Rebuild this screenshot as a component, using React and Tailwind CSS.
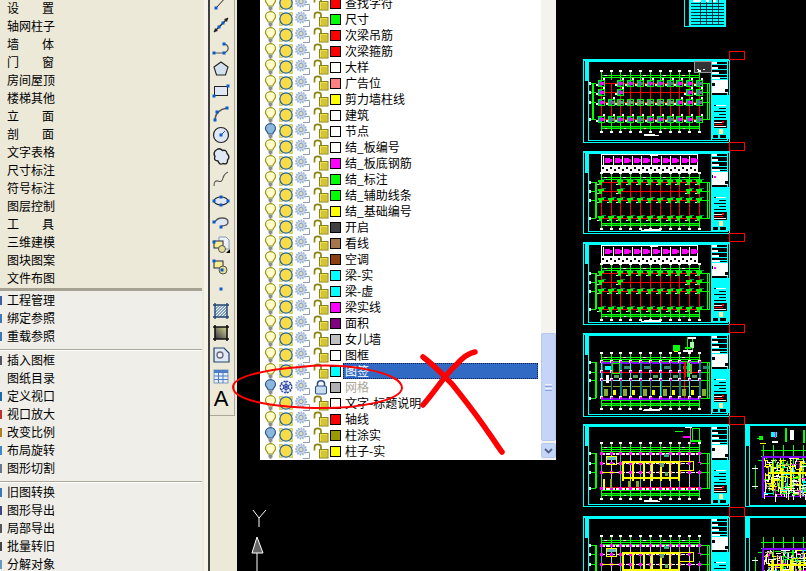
import React from "react";

const CJK = { fontFamily: '"Noto Sans CJK SC", "Liberation Sans", sans-serif' };

const upper = ["设置","轴网柱子","墙体","门窗","房间屋顶","楼梯其他","立面","剖面","文字表格","尺寸标注","符号标注","图层控制","工具","三维建模","图块图案","文件布图"];
const sec2 = [["工程管理","bg-[#3a5fa8]"],["绑定参照","bg-[#3c78b8]"],["重载参照","bg-[#3c78b8]"]];
const sec3 = [["插入图框","bg-[#555566]"],["图纸目录",""],["定义视口","bg-[#1a6aa8]"],["视口放大","bg-[#c03030]"],["改变比例","bg-[#b08020]"],["布局旋转","bg-[#3c88c8]"],["图形切割","bg-[#667788]"]];
const sec4 = [["旧图转换","bg-[#3c78b8]"],["图形导出","bg-[#404880]"],["局部导出","bg-[#555555]"],["批量转旧","bg-[#444444]"],["分解对象","bg-[#6699bb]"]];

function MenuRow({ label, mark }) {
  const two = label.length === 2;
  return (
    <div className="flex h-[18px] items-center text-[12px] leading-none text-black">
      <div className="w-[7px] flex-none">
        {mark ? <div className={`h-[9px] w-[2px] ${mark}`} /> : null}
      </div>
      <div className={two ? "flex w-[47px] justify-between" : "flex"}>
        {two ? (<><span>{label[0]}</span><span>{label[1]}</span></>) : <span>{label}</span>}
      </div>
    </div>
  );
}

const Sep = () => <div className="h-[2px] border-t border-b border-t-[#aca899] border-b-white" />;

function Grip({ x, y }) {
  return <rect x={x - 1.5} y={y - 1.5} width="3" height="3" fill="#0a5cc8" />;
}

const tools = [
  <g><path d="M6 16 L17 4" stroke="#222" fill="none" /><Grip x={6} y={16} /></g>,
  <g><path d="M4 18 L18 4" stroke="#222" strokeWidth="1.4" fill="none" /><path d="M4 18l1-4 3 3zM18 4l-1 4-3-3z" fill="#222" /><Grip x={9} y={13} /><Grip x={13} y={9} /></g>,
  <g><path d="M4 17 H14 Q19 15 18 11 Q17 8 14 8" stroke="#555" strokeWidth="1.2" fill="none" /><Grip x={4} y={17} /><Grip x={14} y={17} /><Grip x={14} y={8} /></g>,
  <path d="M11 4 L18 9 L15.5 17 H6.5 L4 9 Z" fill="#d3e0ee" stroke="#222" strokeWidth="1.1" />,
  <g><rect x="4.5" y="6.5" width="13" height="9" fill="#dfe8f4" stroke="#222" /><Grip x={4} y={16} /><Grip x={18} y={6} /></g>,
  <g><path d="M5 17 Q6 8 17 6" stroke="#555" strokeWidth="1.4" fill="none" /><Grip x={5} y={18} /><Grip x={7} y={10} /><Grip x={17} y={6} /></g>,
  <g><circle cx="11" cy="11" r="7.5" fill="#dfe8f4" stroke="#222" strokeWidth="1.2" /><path d="M11 11 L15 7" stroke="#0a5cc8" /><Grip x={11} y={11} /></g>,
  <path d="M7 3.500 Q10 1.500 12.500 4.500 Q16.500 3.500 17 7.500 Q20.500 11 17.500 14 Q18 19 13 17.500 Q9.500 19.500 8 15 Q3 14.500 5 10.500 Q2.500 6 7 3.500Z" fill="#dfe8f4" stroke="#222" strokeWidth="1.4" />,
  <path d="M4 18 Q4 12 8 13 Q12 15 13 10 Q14 6 18 4" stroke="#555" strokeWidth="1.1" fill="none" />,
  <g><ellipse cx="11" cy="11" rx="7" ry="4" fill="#dfe8f4" stroke="#222" strokeWidth="1.1" /><Grip x={11} y={7} /><Grip x={11} y={15} /><Grip x={4} y={11} /><Grip x={18} y={11} /></g>,
  <g><path d="M5 10 Q7 6 12 6 Q18 6 18 10 Q18 14 11 14" stroke="#555" strokeWidth="1.3" fill="#dfe8f4" /><Grip x={4} y={10} /><Grip x={11} y={15} /></g>,
  <g><path d="M9 3 H16 L19 6 V15 H9Z" fill="#eef2f8" stroke="#7f9db9" /><rect x="4" y="7" width="9" height="7" fill="#f6ee90" stroke="#224" /><circle cx="12" cy="15" r="3.5" fill="#e6de90" stroke="#555" /><Grip x={4} y={8} /><path d="M16 19 L20 19 L20 15Z" fill="#000" /></g>,
  <g><rect x="4" y="5" width="9" height="7" fill="#f6ee90" stroke="#224" /><circle cx="13" cy="14" r="4" fill="#e6de90" stroke="#555" /><Grip x={4} y={5} /><Grip x={12} y={14} /></g>,
  <Grip x={11} y={11} />,
  <g><rect x="5" y="5" width="12" height="12" fill="#7fa0c8" /><path d="M5 8 L8 5 M5 11 L11 5 M5 14 L14 5 M5 17 L17 5 M8 17 L17 8 M11 17 L17 11 M14 17 L17 14" stroke="#fff" /><path d="M3 5 H19 M3 17 H19 M5 3 V19 M17 3 V19" stroke="#23466e" strokeWidth="1.4" /></g>,
  <g><defs><linearGradient id="gr" x1="0" y1="1" x2="1" y2="0"><stop offset="0" stopColor="#334" /><stop offset="1" stopColor="#d8d890" /></linearGradient></defs><rect x="5" y="5" width="12" height="12" fill="url(#gr)" /><path d="M3 5 H19 M3 17 H19 M5 3 V19 M17 3 V19" stroke="#111" strokeWidth="1.6" /></g>,
  <g><path d="M4 4 H14 L19 9 V18 H4Z" fill="#dfe8f4" stroke="#23466e" strokeWidth="1.2" /><circle cx="10" cy="11" r="3" fill="#eef2f8" stroke="#667" strokeWidth="1.3" /></g>,
  <g><rect x="4" y="4" width="14" height="13" fill="#e8eef8" stroke="#7f9db9" /><rect x="4" y="4" width="14" height="3" fill="#4a7cc8" /><path d="M4 10 H18 M4 13.5 H18 M8.5 7 V17 M13 7 V17" stroke="#4a7cc8" /></g>,
];

function Bulb({ off }) {
  const fill = off ? "#8ab8e0" : "#fffcc8";
  const line = off ? "#33587f" : "#9a9410";
  return (
    <svg width="16" height="16" viewBox="0 0 16 16" className="flex-none">
      <path d="M8.500 0.700 C5.300 0.700 3.500 3 3.500 5.500 C3.500 8 6 9 6.200 11 H10.800 C11 9 13.500 8 13.500 5.500 C13.500 3 11.700 0.700 8.500 0.700Z" fill={fill} stroke={line} strokeWidth="1.200" />
      <rect x="6.500" y="11.500" width="4" height="3" fill="#8c8c8c" />
      <rect x="7.500" y="14.500" width="2" height="1" fill="#444" />
    </svg>
  );
}
function Sun({ frozen }) {
  if (frozen) {
    return (
      <svg width="16" height="16" viewBox="0 0 16 16" className="flex-none">
        <circle cx="8" cy="8" r="5.800" fill="#e8eefa" stroke="#2a40a8" strokeWidth="1.300" strokeDasharray="2 1" />
        <circle cx="8" cy="8" r="2.500" fill="none" stroke="#2a40a8" />
        <path d="M8 2 V14 M2.800 5 L13.200 11 M2.800 11 L13.200 5" stroke="#2a40a8" />
      </svg>
    );
  }
  return (
    <svg width="16" height="16" viewBox="0 0 16 16" className="flex-none">
      <path d="M1.500 1.500h3v3h-3zM11.500 1.500h3v3h-3zM1.500 11.500h3v3h-3zM11.500 11.500h3v3h-3z" fill="#f0e050" stroke="#a8a040" strokeWidth="0.500" />
      <circle cx="8" cy="8" r="6.200" fill="#f8dc48" stroke="#2468a8" strokeWidth="1.300" />
    </svg>
  );
}
function Gear() {
  return (
    <svg width="16" height="16" viewBox="0 0 16 16" className="flex-none">
      <path d="M9 9.500 H15.500 V15.500 H9" fill="none" stroke="#8f9db0" />
      <circle cx="7" cy="6.500" r="5" fill="#c8d6e6" stroke="#9ab2d4" strokeWidth="2" strokeDasharray="1.500 1" />
      <circle cx="7" cy="6.500" r="2.200" fill="#dedcb4" stroke="#8ca2c4" />
    </svg>
  );
}
function Lock({ locked }) {
  if (locked) {
    return (
      <svg width="16" height="16" viewBox="0 0 16 16" className="flex-none">
        <path d="M4.500 8 V4.500 C4.500 0.800 11.500 0.800 11.500 4.500 V8" fill="none" stroke="#2a5090" strokeWidth="1.600" />
        <rect x="2.500" y="7" width="11" height="8" rx="1.500" fill="#c8dcf0" stroke="#2a5090" strokeWidth="1.100" />
      </svg>
    );
  }
  return (
    <svg width="16" height="16" viewBox="0 0 16 16" className="flex-none">
      <path d="M1.500 7.500 V4 C1.500 0.500 8 0.500 8 4 V7" fill="none" stroke="#8a8410" strokeWidth="1.700" />
      <rect x="6.500" y="6.500" width="8.500" height="8.500" fill="#f0e050" stroke="#8a8410" />
      <path d="M8 9h6M8 11h6M8 13h6" stroke="#b8a820" />
    </svg>
  );
}

const layers = [
  ["查找字符","#ff0000"],["尺寸","#00ff00"],["次梁吊筋","#ff0000"],["次梁箍筋","#ff0000"],["大样","#ffffff"],["广告位","#ff8080"],["剪力墙柱线","#ffff00"],["建筑","#ffffff"],
  ["节点","#ffffff",1],["结_板编号","#ffffff"],["结_板底钢筋","#ff00ff"],["结_标注","#00ff00"],["结_辅助线条","#00ff00"],["结_基础编号","#ffff00"],["开启","#404040"],["看线","#a5764a"],
  ["空调","#8b4010"],["梁-实","#00ffff"],["梁-虚","#00ffff"],["梁实线","#ff00ff"],["面积","#800080"],["女儿墙","#c0c0c0"],["图框","#ffffff"],["图签","#00ffff"],
  ["网格","#b0b0b0",2],["文字-标题说明","#ffffff"],["轴线","#ff0000"],["柱涂实","#999900",1],["柱子-实","#ffff00"],
];

function LayerRow({ name, color, state }) {
  const selected = name === "图签";
  const grid = state === 2;
  return (
    <div className="flex h-[16px] flex-none items-center pl-[2px] pr-[3px]">
      <Bulb off={!!state} />
      <Sun frozen={grid} />
      <Gear />
      <div className="w-[3px] flex-none" />
      <Lock locked={grid} />
      <div className="ml-px h-[11px] w-[11px] flex-none border border-black" style={{ backgroundColor: color }} />
      {selected ? (
        <div className="ml-[2px] flex h-[16px] flex-1 items-center border border-dotted border-[#0b1f4a] bg-[#316ac5] pl-px text-[12px] leading-none text-white">{name}</div>
      ) : (
        <div className={`ml-[4px] whitespace-nowrap text-[12px] leading-none ${grid ? "text-[#aca899]" : "text-black"}`}>{name}</div>
      )}
    </div>
  );
}

/* ---------- CAD drawing ---------- */
const C = "#00ffff", G = "#00ff00", Rd = "#ff0000", W = "#ffffff", M = "#ff00ff", Y = "#ffff00", P = "#8000ff", K = "#000000";
let seed = 7;
const rnd = () => { seed = (seed * 16807) % 2147483647; return seed / 2147483647; };

function build() {
  const r = [];
  const R = (x, y, w, h, c) => r.push([x, y, w, h, c]);
  const box = (x, y, w, h, c) => { R(x, y, w, 1, c); R(x, y + h - 1, w, 1, c); R(x, y, 1, h, c); R(x + w - 1, y, 1, h, c); };
  const X = [601, 611, 620, 630, 640, 650, 660, 670, 679, 689, 699];

  const frame = (x, y, w, h, titleX) => {
    box(x, y, w, h, C);
    R(x + 1, y + 1, w - 2, 1, C);
    box(x + 5, y + 2, w - 7, h - 4, C);
    R(x + 2, y + 2, 3, 20, C);
    const t = titleX;
    R(t, y + 2, 1, h - 4, C);
    const T = w + x - 2 - t;
    R(t, y + 18, T, 1, C);
    for (let i = 0; i < 4; i++) { R(t + 1, y + 5 + i * 5, T - 2, 1, C); R(t + 1, y + 3 + i * 5, 5 + i, 2, W); }
    R(t + 1, y + 21, T - 1, 13, W);
    R(t + 1, y + 24, 3, 3, K);
    R(t + T - 3, y + 30, 4, 3, K);
    R(t, y + 36, T + 1, 44, C);
    for (let i = 0; i < 6; i++) {
      R(t + 3 + (i % 2) * 5, y + 46 + i * 3, T - 5 - (i % 2) * 5, 1, K);
    }
    R(t + 5, y + 46, T - 7, 1, W);
    R(t + 3, y + 61, T - 4, 8, K);
    R(t + 3, y + 63, 8, 1, W);
    R(t + 3, y + 65, 9, 1, Rd);
    R(t + 11, y + 62, 2, 2, Rd);
    R(t + 3, y + 67, 12, 1, W);
    R(t + 8, y + 70, 4, 5, "#ffee99");
    R(t + 2, y + 76, 5, 3, K);
    R(t + 9, y + 76, T - 11, 3, K);
  };

  const axes = (rows, yTop, yBot, gv = 593) => {
    [yTop, yTop + 2, yBot, yBot + 2].forEach((yy) => R(601, yy, 99, 1, G));
    R(601, yBot + 1, 99, 1, "#008800");
    X.forEach((x, i) => {
      R(x, yTop - 3, 1, 8, G); R(x - 1, yTop - 5, 3, 2, W);
      R(x, yBot - 3, 1, 9, G); R(x - 1, yBot + 5, 3, 2, W);
      if (i % 2 === 0 && i < 10) { R(x + 3, yTop, 3, 1, W); R(x + 4, yBot + 2, 2, 1, W); }
    });
    const h = rows[rows.length - 1] - rows[0];
    R(gv, rows[0], 2, h, G);
    R(707, rows[0], 1, h, G);
    R(709, rows[0], 1, h, G);
    rows.forEach((yy) => { R(590, yy, 6, 1, G); R(589, yy - 1, 2, 3, W); R(700, yy, 10, 1, G); });
  };

  const beams = (rows, c = Rd) => {
    rows.forEach((yy) => R(601, yy, 99, 1, c));
    X.forEach((x) => R(x, rows[0], 1, rows[rows.length - 1] - rows[0], c));
  };

  // Sheet 1
  {
    const y = 59;
    frame(583, y, 147, 84, 711);
    R(694, 61, 18, 12, "#333333"); box(694, 61, 18, 12, "#999999");
    R(697, 69, 2, 1, W); R(703, 69, 2, 1, W);
    const rows = [83, 92, 102, 119];
    axes(rows, 75, 126, 592);
    beams(rows);
    rows.forEach((yy, ri) => X.forEach((x, i) => {
      if (ri === 1 && ![0, 2, 9, 10].includes(i)) return;
      if (ri === 0 && i === 1) return;
      const grey = ri === 2 && i >= 2 && i <= 7;
      R(x - 3, yy - 3, 7, 7, G);
      R(x - 2, yy - 2, 5, 5, K);
      R(x - 2, yy - 2, 3, 5, grey ? "#708080" : "#00a0a0");
      R(x - 1, yy - 1, 4, 3, grey ? "#7f9090" : i % 3 === 1 ? "#8060a0" : M);
      R(x - 5, yy + 1, 2, 2, W);
      if (!grey) R(x + 2, yy - 5, 2, 2, W);
    }));
    R(644, 134, 11, 1, W); R(644, 135, 15, 1, W);
  }

  const s2 = (y) => {
    frame(583, y, 147, 83, 711);
    R(601, y + 3, 97, 19, W);
    R(602, y + 4, 95, 10, K);
    R(650, y + 3, 8, 2, W);
    [0, 1, 2, 3, 4, 5, 6, 7, 8, 9].forEach((i) => {
      const xx = Math.round(603 + i * 9.600);
      R(xx, y + 5, 1, 10, W);
      R(xx + 2, y + 7, 5, 5, M);
      R(xx + 7, y + 8, 2, 3, M);
    });
    for (let i = 0; i < 24; i++) R(602 + i * 4, y + 16 + (i % 2) * 2, 2, 2, K);
    const rows = [y + 31, y + 40, y + 49, y + 67];
    axes(rows, y + 26, y + 72, 595);
    beams(rows);
    rows.forEach((yy, ri) => X.forEach((x, i) => {
      if (ri === 1 && ![0, 2, 9, 10].includes(i)) return;
      if (ri === 0 && i === 1) return;
      R(x - 3, yy - 2, 6, 2, G);
      R(x - 2, yy, 3, 3, G);
      R(x + 1, yy - 3, 4, 1, "#009944");
      R(x - 4, yy + 2, 2, 1, W);
    }));
    R(644, y + 78, 15, 1, W); R(641, y + 79, 20, 1, W);
    R(713, y + 24, 4, 3, W); R(714, y + 25, 2, 2, M);
  };
  s2(151);
  s2(242);

  const dense = (rows, yTop, yBot, kind) => {
    axes(rows, yTop, yBot, 595);
    R(601, yTop + 4, 99, 1, G);
    R(601, yBot - 3, 99, 1, G);
    const h = rows[3] - rows[0];
    if (kind === 0) {
      R(601, rows[0], 99, 2, P); R(601, rows[3], 99, 2, P); R(699, rows[0], 2, h, P);
      R(601, rows[0], 2, h, Rd); R(684, rows[0], 1, h, Rd);
      R(601, rows[1], 99, 1, Rd);
      R(601, rows[2], 99, 1, "#80ffff"); R(601, rows[2] + 6, 99, 1, "#88aa33");
      X.forEach((x, i) => { R(x, rows[0], 1, h, i % 3 ? "#009090" : C); R(x + 1, rows[0], 1, h, i % 2 ? K : "#007777"); });
      X.forEach((x, i) => {
        if (i % 2 === 0) { R(x + 3, rows[2] + 9, 4, 7, "#88aa33"); R(x + 4, rows[0] + 4, 6, 3, "#338877"); }
        else { R(x + 3, rows[1] + 3, 5, 3, "#60a060"); R(x + 2, rows[2] + 10, 3, 5, Y); }
        rows.forEach((yy) => { R(x - 1, yy - 2, 3, 3, W); R(x, yy - 1, 2, 2, M); });
      });
      R(605, rows[0] + 4, 6, 4, C);
      box(612, rows[0] + 1, 8, 11, G); R(606, rows[1] + 3, 3, 8, W);
      R(684, rows[0], 2, 15, Rd); R(687, rows[0], 2, 15, G);
      R(690, rows[0] + 2, 2, 10, "#88aa33");
      box(687, 337, 6, 14, G); R(688, 337, 8, 2, W); R(690, 342, 4, 6, "#aaffaa"); R(673, 345, 7, 6, G); R(683, 350, 10, 2, W); R(674, 351, 4, 1, Y); R(685, 347, 6, 2, G);
    } else {
      R(601, rows[0], 99, 1, Rd); R(601, rows[3] - 1, 99, 1, Rd); R(601, rows[0], 1, h, Rd);
      X.forEach((x, i) => { R(x, rows[0], 1, h, i % 2 ? "#cccccc" : "#55aaaa"); });
      rows.forEach((yy, ri) => {
        for (let k = 601; k < 700; k += 5) R(k, yy, 4, ri === 0 || ri === 3 ? 2 : 1, W);
      });
      X.forEach((x) => rows.forEach((yy) => R(x - 1, yy - 1, 3, 3, M)));
      R(622, rows[1] - 2, 58, 2, Y); R(622, rows[2] + 5, 58, 2, Y);
      [622, 632, 643, 651, 660, 669, 678].forEach((x) => R(x, rows[1] - 2, 2, rows[2] - rows[1] + 11, Y));
      R(603, rows[2] + 7, 2, 9, Y); R(610, rows[2] + 7, 2, 9, "#88aa33"); R(628, rows[2] + 9, 3, 6, "#88aa33"); R(636, rows[2] + 9, 3, 6, "#88aa33");
      R(660, rows[1], 4, 4, "#66aa66"); R(665, rows[2], 3, 4, "#66aa66"); R(664, rows[0] + 1, 5, 3, "#33aa88");
      box(606, rows[0] + 3, 11, 9, Y); R(607, rows[0] + 4, 9, 3, "#66bbbb"); R(690, rows[1], 10, 7, K);
      box(679, rows[1] - 2, 15, 10, Y); R(602, rows[2], 14, 1, Y);
    }
  };

  // Sheet 4
  frame(583, 333, 147, 84, 711);
  dense([362, 372, 380, 398], 357, 403, 0);
  R(644, 409, 15, 1, W); R(643, 410, 17, 1, W);
  // Sheet 5
  frame(583, 424, 147, 83, 711);
  dense([453, 463, 472, 488], 447, 493, 1);
  box(692, 428, 8, 14, G); R(690, 428, 1, 16, "#999999"); R(675, 431, 8, 1, G); R(685, 427, 7, 1, W); R(691, 440, 10, 2, G); R(692, 443, 3, 1, M); R(683, 436, 7, 2, M);
  R(644, 500, 14, 1, W); R(644, 501, 16, 1, W);
  // Sheet 6
  frame(583, 516, 147, 90, 711);
  dense([545, 554, 564, 590], 540, 595, 1);

  // Right-hand sheets
  const right = (y, h) => {
    box(745, y, 70, h, C);
    R(746, y + 1, 68, 1, C);
    R(749, y + 2, 1, h - 4, C);
    R(746, y + 2, 4, 20, C);
    const top = y + 24;
    [0, 2].forEach((d) => R(761, top + 2 + d * 3, 50, 1, G));
    for (let i = 0; i < 5; i++) R(763 + i * 10, top - 3, 1, 50, G);
    R(762, top + 8, 50, 2, P);
    R(762, top + 8, 2, 42, P);
    R(762, top + 48, 50, 1, P);
    R(755, top + 17, 1, 24, G); R(752, top + 20, 6, 1, W); R(752, top + 38, 6, 1, W); R(758, top + 12, 4, 1, G);
    for (let i = 0; i < 300; i++) {
      const xx = 764 + Math.floor(rnd() * 42), yy = top + 10 + Math.floor(rnd() * 37);
      const c = [W, W, W, Y, Y, Y, "#bbaa77", C, G, M][Math.floor(rnd() * 10)];
      if (rnd() > 0.5) R(xx, yy, 1 + Math.floor(rnd() * 9), 1, c); else R(xx, yy, 1, 1 + Math.floor(rnd() * 9), c);
    }
    [772, 781, 790, 799].forEach((x) => R(x, top + 20, 2, 22, Y));
    R(768, top + 24, 40, 2, Y);
  };
  right(424, 83);
  R(749, 505, 60, 1, C);
  right(516, 90);
  R(759, 436, 4, 4, G); R(757, 438, 5, 1, G); R(771, 432, 6, 5, C); R(775, 432, 1, 6, M); R(785, 428, 2, 14, G); R(790, 430, 4, 10, W); R(760, 443, 6, 1, Y); R(772, 441, 6, 2, W); R(803, 430, 2, 13, G);

  // Small sheet cut by the top edge
  box(684, -8, 42, 35, C);
  R(689, -8, 1, 34, C);
  R(690, 0, 35, 26, C);
  for (let i = 0; i < 8; i++) R(691, 3 + i * 3, 33, 1, "#003040");
  [700, 706, 712, 718].forEach((x) => R(x, 0, 1, 25, "#003040"));
  R(693, 0, 8, 2, W); R(706, 0, 3, 2, W); R(713, 0, 3, 2, W);

  // Red markers between sheets
  [[51, 9], [142, 9], [233, 9], [324, 9], [416, 9], [507, 10]].forEach(([y, h]) => box(729, y, 16, h, Rd));
  return r;
}
const cad = build();

export default function App() {
  return (
    <div className="relative flex h-[571px] w-[806px] overflow-hidden bg-black" style={CJK}>
      {/* Left menu */}
      <div className="flex w-[202px] flex-none flex-col">
        <div className="h-[288px] flex-none bg-[#ece9d8]">
          <div className="-mt-px">
            {upper.map((l) => <MenuRow key={l} label={l} />)}
          </div>
        </div>
        <div className="flex flex-1 flex-col bg-[#efeee8]">
          <div className="h-[3px] bg-[#a5a294]" />
          {sec2.map(([l, m]) => <MenuRow key={l} label={l} mark={m} />)}
          <div className="h-[4px]" />
          <Sep />
          {sec3.map(([l, m]) => <MenuRow key={l} label={l} mark={m} />)}
          <div className="h-[4px]" />
          <Sep />
          {sec4.map(([l, m]) => <MenuRow key={l} label={l} mark={m} />)}
        </div>
      </div>
      <div className="w-[6px] flex-none border-l-2 border-l-[#ece9d8] bg-[#f6f4ea]" />
      {/* Draw toolbar */}
      <div className="w-[29px] flex-none border-l-2 border-l-[#3f3f3f] bg-[#ece9d8]">
        <div className="w-[25px] border-r border-b border-r-[#aca899] border-b-[#aca899] pb-[5px]">
          <div className="-mt-[8px]">
            {tools.map((t, i) => (
              <div key={i} className="h-[22px] w-[22px]">
                <svg width="22" height="22" viewBox="0 0 22 22">{t}</svg>
              </div>
            ))}
            <div className="flex h-[22px] w-[22px] items-center justify-center text-[22px] font-normal leading-none text-black" style={{ fontFamily: '"Liberation Sans", sans-serif' }}>A</div>
          </div>
        </div>
      </div>
      {/* Model space */}
      <div className="relative flex-1 bg-black">
        <svg className="absolute inset-0" width="569" height="571" viewBox="237 0 569 571" shapeRendering="crispEdges">
          {cad.map(([x, y, w, h, c], i) => <rect key={i} x={x} y={y} width={w} height={h} fill={c} />)}
          <g shapeRendering="auto">
            <path d="M253 510 L259 518 L266 510 M259 518 V527" stroke="#fff" strokeWidth="1" fill="none" />
            <path d="M257 537 L252 553 H263 Z" fill="#666" stroke="#fff" />
            <path d="M257 553 V571" stroke="#fff" />
          </g>
        </svg>
        {/* Layer dropdown */}
        <div className="absolute left-[23px] top-0 flex h-[460px] w-[296px] overflow-hidden bg-white">
          <div className="flex min-w-0 flex-1 flex-col -mt-[5px]">
            {layers.map(([n, c, s]) => <LayerRow key={n} name={n} color={c} state={s} />)}
          </div>
          <div className="flex w-[15px] flex-none flex-col bg-[#f4f3ee]">
            <div className="h-[333px] flex-none" />
            <div className="flex h-[108px] flex-none flex-col items-center justify-center gap-px rounded-[2px] border border-[#b4c8f0] bg-[#c5d5fa]">
              <div className="h-px w-[7px] bg-[#eef2fe]" />
              <div className="h-px w-[7px] bg-[#8ca8e0]" />
              <div className="h-px w-[7px] bg-[#eef2fe]" />
              <div className="h-px w-[7px] bg-[#8ca8e0]" />
            </div>
            <div className="mt-[2px] flex h-[15px] flex-none items-center justify-center rounded-[2px] border border-[#b4c8f0] bg-[#c5d5fa]">
              <svg width="9" height="6" viewBox="0 0 9 6"><path d="M1 1 L4.500 4.500 L8 1" fill="none" stroke="#4d6185" strokeWidth="1.800" /></svg>
            </div>
          </div>
        </div>
      </div>
      {/* Hand-drawn markup over the window */}
      <svg className="pointer-events-none absolute inset-0" width="806" height="571" viewBox="0 0 806 571">
        <path d="M300 367 C345 362 402 372 402 388 C401 400 360 409 315 408 C270 407 233 400 233 387 C233 377 262 370 300 367Z" fill="none" stroke="#ff0000" strokeWidth="2" />
        <path d="M423 357 C435 366 443 375 452 384 C464 399 478 417 488 432 C494 440 498 447 502 452" fill="none" stroke="#ff0000" strokeWidth="5.500" strokeLinecap="round" />
        <path d="M475 352 C468 353 462 358 455 366 C444 376 437 389 423 405" fill="none" stroke="#ff0000" strokeWidth="5.500" strokeLinecap="round" />
      </svg>
    </div>
  );
}
